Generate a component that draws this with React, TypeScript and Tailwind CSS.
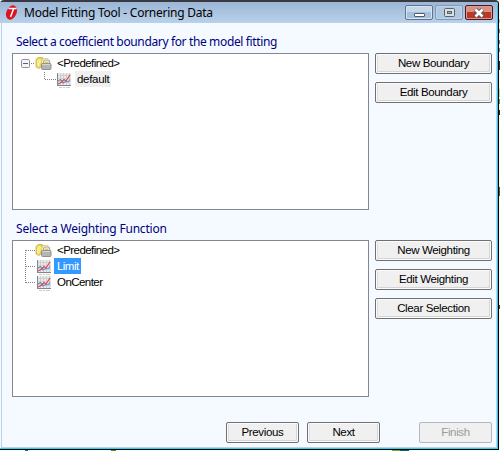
import React from "react";

function FolderLock() {
  return (
    <svg width="17" height="16" viewBox="0 0 17 16" className="shrink-0">
      <path d="M1 3.500 3 1.500h4l1.500 1h4.500l1 2V11H6l-2 1.500-3-1.500z" fill="#e6cb58" stroke="#cdb550" strokeWidth=".8" />
      <path d="M2 4.500 3.500 3h2.500v3L4 11.500 2 10z" fill="#f6ee86" />
      <path d="M8.500 8V6a2 2 0 0 1 2-2h2a2 2 0 0 1 2 2v2" fill="none" stroke="#f7f3dc" strokeWidth="3" />
      <path d="M8.500 8V6a2 2 0 0 1 2-2h2a2 2 0 0 1 2 2v2" fill="none" stroke="#a9a6a0" strokeWidth="1.200" />
      <rect x="6.500" y="7.500" width="9.500" height="6" rx="1" fill="#b5b5b5" stroke="#929292" />
      <path d="M7.500 8.500h7.500" stroke="#d6d6d6" />
    </svg>
  );
}

function Chart() {
  return (
    <svg width="16" height="16" viewBox="0 0 16 16" className="shrink-0">
      <rect x="1" y="1" width="14" height="12" fill="#e9e9e9" />
      <path d="M4.500 1v12M7.500 1v12M10.500 1v12M13.500 1v12M1 3.500h14M1 6.500h14M1 9.500h14" stroke="#cfcfcf" />
      <path d="M1.500 1v13M1 13.500h14" stroke="#858585" />
      <path d="M3 15.500h3M7 15.500h2M10 15.500h4" stroke="#cccccc" />
      <path d="m2 9 2.500-1.500L7 11l3-1.500 2 .5 2-2.500" fill="none" stroke="#6088cf" strokeWidth="1.100" />
      <path d="m2 12 3-1.500L8 7.500l2 1.500 4-6" fill="none" stroke="#dd4248" strokeWidth="1.100" />
    </svg>
  );
}

function Button({ children, className, disabled = false }: { children: React.ReactNode; className: string; disabled?: boolean }) {
  return (
    <button
      className={`flex h-[21px] items-center justify-center rounded-[2px] border bg-[#f0f0f0] font-['Liberation_Sans'] text-[11.5px] leading-none tracking-[-0.35px] whitespace-nowrap ${
        disabled ? "border-[#b5b8ba] text-[#9a9a9a]" : "border-[#707070] text-black shadow-[inset_1px_1px_0_#fbfbfb,inset_-1px_-1px_0_#fbfbfb,inset_2px_0_0_#dedede,inset_-2px_-2px_0_#d5d5d5]"
      } ${className}`}
    >
      {children}
    </button>
  );
}

export default function App() {
  return (
    <div className="grid h-[451px] w-[500px] grid-cols-[499px_1px] grid-rows-[450px_1px] overflow-hidden bg-[#f8fafa] font-['Liberation_Sans',sans-serif]">
      <div className="flex h-[450px] w-[499px] flex-col rounded-t-[4px] border-t-2 border-r border-b border-t-[#393941] border-r-black border-b-black">
        <div className="flex min-h-0 flex-1 flex-col rounded-tr-[3px] border-r border-b border-r-[#35c8ea] border-b-[#2bd2f2] bg-[#f4faff]">
          <header className="flex h-[21px] shrink-0 items-start bg-linear-to-b from-[#9bb6d6] to-[#b9d1ea] pl-1">
            <svg width="16" height="17" viewBox="0 0 16 17" className="mt-[2px] shrink-0">
              <ellipse cx="7.500" cy="8.500" rx="5" ry="7.500" transform="rotate(24 7.500 8.500)" fill="#d91520" />
              <path d="M4.500 4.500h8M9.500 5 6.500 13" stroke="white" strokeWidth="1.500" fill="none" />
            </svg>
            <span className="ml-1 pt-[1px] font-['Noto_Sans'] text-[12px] leading-[19px] tracking-[-0.25px] whitespace-nowrap text-black">Model Fitting Tool - Cornering Data</span>
            <div className="mt-[3px] mr-[4px] ml-auto flex gap-[2px]">
              <div className="flex h-[15px] w-7 justify-center rounded-[2px] border border-[#62748b] bg-linear-to-b from-[#c4d6ea] from-50% to-[#a5c0de] to-50% pt-[7px] shadow-[inset_0_0_0_1px_#d7e5f3]">
                <span className="h-1 w-[11px] rounded-[1px] border border-[#565b66] bg-white" />
              </div>
              <div className="flex h-[15px] w-7 justify-center rounded-[2px] border border-[#8299b7] bg-[#b0c8e2] pt-[2px] shadow-[inset_0_0_0_1px_#bfd3e9]">
                <svg width="11" height="9" viewBox="0 0 11 9">
                  <rect x=".5" y=".5" width="10" height="8" rx="1" fill="#dce0e3" stroke="#59636d" />
                  <rect x="3.500" y="3.500" width="4" height="2" fill="#93b4cf" stroke="#59636d" />
                </svg>
              </div>
              <div className="flex h-[15px] w-7 justify-center rounded-[2px] border border-[#521521] bg-linear-to-b from-[#d99184] from-50% to-[#b93a24] to-50% pt-[2px] shadow-[inset_0_0_0_1px_#dd9b8f]">
                <svg width="12" height="10" viewBox="0 0 12 10">
                  <path d="m2.500 1.500 7 7m0-7-7 7" stroke="#565b67" strokeWidth="4.500" />
                  <path d="m2.500 1.500 7 7m0-7-7 7" stroke="#fff" strokeWidth="2.500" />
                </svg>
              </div>
            </div>
          </header>
          <main className="ml-px flex min-h-0 flex-1 flex-col border-r border-b border-l border-[#b9d1ea] pl-[10px]">
            <h2 className="h-[30px] pt-[10px] pl-1 font-['Noto_Sans'] text-[12px] leading-[17px] font-normal tracking-[-0.36px] whitespace-nowrap text-[#000080]">Select a coefficient boundary for the model fitting</h2>
            <section className="flex gap-[6px]">
              <div className="h-[157px] w-[357px] border border-[#828790] bg-white pt-px pl-[7px] text-[11.5px] leading-4 tracking-[-0.55px]">
                <div className="flex h-4 items-center">
                  <svg width="15" height="16" viewBox="0 0 15 16">
                    <rect x="1.500" y="4.500" width="8" height="8" rx="1" fill="#f5f5f5" stroke="#919191" />
                    <path d="M3 8.500h5" stroke="#4b63a7" />
                    <path d="M11 8.500h4" stroke="#808080" strokeDasharray="1 1" />
                  </svg>
                  <div className="pt-[2px]"><FolderLock /></div>
                  <span className="ml-[5px]">&lt;Predefined&gt;</span>
                </div>
                <div className="flex h-4 items-center pl-[24px]">
                  <svg width="12" height="16" viewBox="0 0 12 16">
                    <path d="M.5 1v8M1 8.500h11" stroke="#808080" strokeDasharray="1 1" />
                  </svg>
                  <div className="pt-[2px]"><Chart /></div>
                  <span className="ml-[3px] bg-[#f0f0f0] px-[2px] tracking-[-0.3px]">default</span>
                </div>
              </div>
              <div className="flex flex-col gap-2">
                <Button className="w-[117px]">New Boundary</Button>
                <Button className="w-[117px]">Edit Boundary</Button>
              </div>
            </section>
            <h2 className="h-[30px] pt-[10px] pl-1 font-['Noto_Sans'] text-[12px] leading-[17px] font-normal tracking-[-0.2px] whitespace-nowrap text-[#000080]">Select a Weighting Function</h2>
            <section className="flex gap-[6px]">
              <div className="flex h-[157px] w-[357px] border border-[#828790] bg-white pt-px pl-3 text-[11.5px] leading-4 tracking-[-0.55px]">
                <svg width="11" height="48" viewBox="0 0 11 48">
                  <path d="M.5 8v33M1 8.500h10M1 24.500h10M1 40.500h10" stroke="#808080" strokeDasharray="1 1" />
                </svg>
                <div>
                  <div className="flex h-4 items-center"><div className="-ml-px pt-[2px]"><FolderLock /></div><span className="ml-[5px]">&lt;Predefined&gt;</span></div>
                  <div className="flex h-4 items-center"><div className="pt-[2px]"><Chart /></div><span className="ml-[2px] bg-[#3399ff] pr-[2px] pl-[3px] text-white">Limit</span></div>
                  <div className="flex h-4 items-center"><div className="pt-[2px]"><Chart /></div><span className="ml-[5px]">OnCenter</span></div>
                </div>
              </div>
              <div className="flex flex-col gap-2">
                <Button className="w-[117px]">New Weighting</Button>
                <Button className="w-[117px]">Edit Weighting</Button>
                <Button className="w-[117px]">Clear Selection</Button>
              </div>
            </section>
            <footer className="mt-[25px] mr-1 flex justify-end">
              <Button className="w-[73px]">Previous</Button>
              <Button className="ml-2 w-[73px]">Next</Button>
              <Button className="ml-[39px] w-[73px]" disabled>Finish</Button>
            </footer>
          </main>
        </div>
      </div>
      <div className="flex flex-col">
        <span className="mt-[19px] h-1 bg-[#a4c8d8]" />
        <span className="mt-[6px] h-1 bg-[#4c91b2]" />
        <span className="mt-[7px] h-1 bg-[#4c91b2]" />
        <span className="mt-[4px] h-1 bg-[#4c91b2]" />
        <span className="mt-[9px] h-[9px] bg-[#1c3544]" />
        <span className="mt-[19px] h-2 bg-[#a2dbb6]" />
        <span className="mt-[2px] h-[5px] bg-[#42ab66]" />
        <span className="mt-[6px] h-[5px] bg-[#123321]" />
        <span className="mt-[72px] h-[9px] bg-[#43602c]" />
        <span className="mt-[109px] h-1 bg-[#5b3424]" />
      </div>
      <div className="flex">
        <span className="ml-[25px] w-[3px] bg-[#177b4d]" />
        <span className="ml-[83px] w-[5px] bg-[#717f19]" />
        <span className="ml-[276px] w-[8px] bg-[#7fa72f]" />
        <span className="w-[9px] bg-[#205b68]" />
      </div>
    </div>
  );
}
